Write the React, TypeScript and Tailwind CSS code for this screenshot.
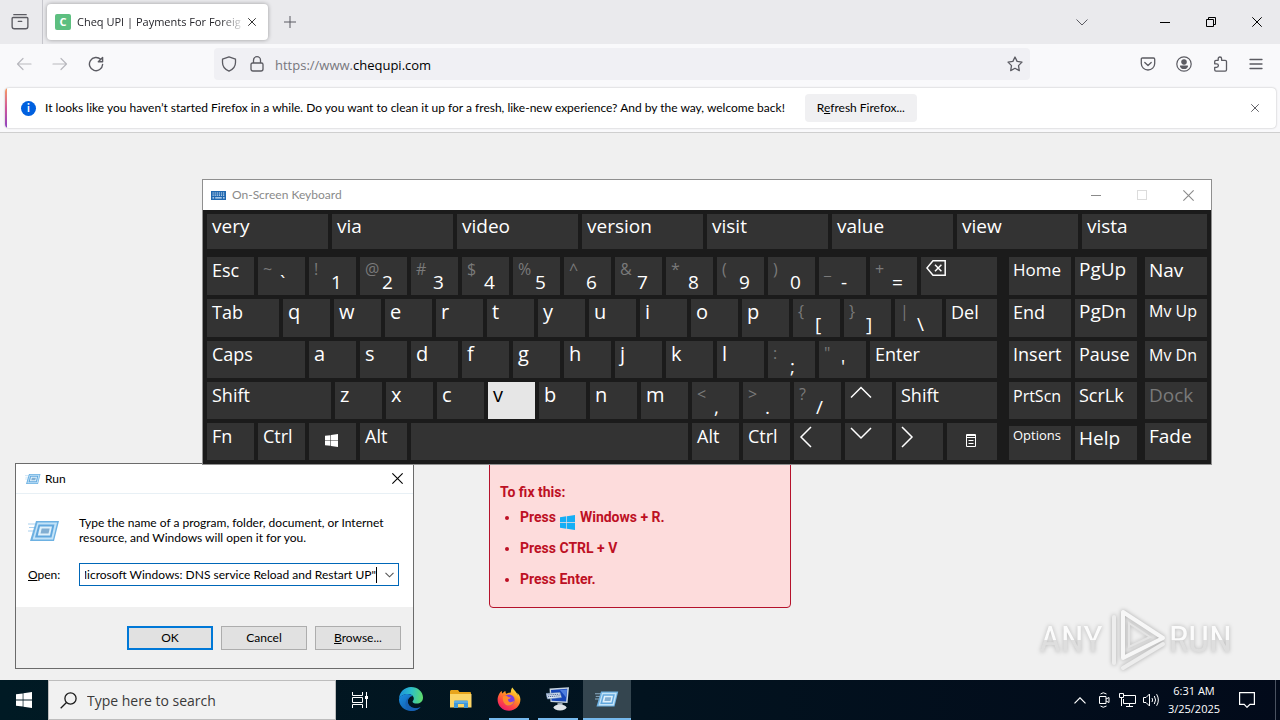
import { useEffect, useRef, type ReactNode } from "react";

/* ---------- icons ---------- */

function Stroke({ size = 16, w = 1.2, children }: { size?: number; w?: number; children: ReactNode }) {
  return (
    <svg width={size} height={size} viewBox="0 0 16 16" fill="none" stroke="currentColor" strokeWidth={w} strokeLinecap="round" strokeLinejoin="round" aria-hidden="true">
      {children}
    </svg>
  );
}

function CloseIcon({ size = 10 }: { size?: number }) {
  return (
    <svg width={size} height={size} viewBox="0 0 10 10" stroke="currentColor" strokeWidth="1" fill="none" aria-hidden="true">
      <path d="M.3.3l9.4 9.4M9.7.3L.3 9.7" />
    </svg>
  );
}

function WindowsLogo({ size, className }: { size: number; className?: string }) {
  return (
    <svg width={size} height={size} viewBox="0 0 16 16" fill="currentColor" className={className} aria-hidden="true">
      <path d="M0 2.3L6.7 1.4v6.2H0zM7.4 1.3L16 0v7.6H7.4zM0 8.4h6.7v6.2L0 13.7zM7.4 8.4H16V16l-8.6-1.3z" />
    </svg>
  );
}

function RunIcon({ className }: { className?: string }) {
  return (
    <svg viewBox="0 0 32 24" className={className} aria-hidden="true">
      <path d="M0 5h9M1 8.500h7M0 12h6" stroke="#a9d0ee" strokeWidth="1" />
      <path d="M8 2h23l-5 20H2z" fill="#6db1e2" />
      <path d="M9.500 3.500h19.600L25 20.500H4.600z" fill="#c3e3f8" />
      <path d="M10.500 5.500h16L23.500 18.500H7z" fill="#62a8de" />
      <path d="M12 7.500h12L22 16.500H9.800z" fill="#def0fb" />
      <path d="M13.700 9.500h8l-1.200 5h-8z" fill="#82aed2" />
    </svg>
  );
}

function KeyboardIcon() {
  return (
    <svg width="15" height="9" viewBox="0 0 15 9" aria-hidden="true">
      <rect width="15" height="9" fill="#2168b0" />
      <path d="M1.500 2h12M1.500 4.200h12" stroke="#cfe3f6" strokeWidth="1.200" strokeDasharray="1.200 .9" />
      <path d="M1.500 6.800h1.600M4.200 6.800h6.600M12 6.800h1.600" stroke="#cfe3f6" strokeWidth="1.200" />
    </svg>
  );
}

function EdgeIcon() {
  return (
    <svg width="24" height="24" viewBox="0 0 24 24" aria-hidden="true">
      <defs>
        <linearGradient id="edgeTop" x1="0" y1="0.300" x2="1" y2="0.400">
          <stop offset="0" stopColor="#1b8fdc" />
          <stop offset=".5" stopColor="#2cbfc9" />
          <stop offset="1" stopColor="#5edb6c" />
        </linearGradient>
        <linearGradient id="edgeLow" x1="0" y1="0" x2="1" y2="1">
          <stop offset="0" stopColor="#1a8ee0" />
          <stop offset="1" stopColor="#0f4f9e" />
        </linearGradient>
      </defs>
      <path d="M0 11.500C.5 5 5.600 0 12 0c7 0 12 5 12 10.500 0 4-3 6-6.200 6-2.800 0-4.300-1-4.300-1.800 0-.7 1.300-1.200 1.300-3.200C14.800 9 12.300 7 8.800 7 5 7 1.500 9 0 11.500z" fill="url(#edgeTop)" />
      <path d="M0 12C1 9 4.500 7 8.800 7c2.200 0 4 .8 5 2-3 .3-5 2.700-5 5.500 0 4 3.700 6.700 8 6.700 2 0 3.600-.5 4.900-1.200C19.500 22.600 16 24 12 24 5 24-.3 18.500 0 12z" fill="url(#edgeLow)" />
      <path d="M8.800 14.500c0-2 1-4 3-5-2.800 1-5.300 3.500-5.300 7.200 0 3.500 2.500 6.300 5.500 7.200 4 0 7.500-1.500 9.700-4-1.300.8-2.900 1.300-4.900 1.300-4.300 0-8-2.700-8-6.700z" fill="#1762b4" />
    </svg>
  );
}

function FolderIcon() {
  return (
    <svg width="22" height="20" viewBox="0 0 22 20" aria-hidden="true">
      <path d="M0 2.500Q0 1 1.200 1H8l1.500 2H20q1 0 1 1v14H0z" fill="#e8a51c" />
      <path d="M0 5h21.500v13.500H0z" fill="#fcd566" />
      <path d="M4 19v-6.500q0-1 1-1h12q1 0 1 1V19h-4v-4H8v4z" fill="#3f97d8" />
      <path d="M4 13h14" stroke="#7cc0ee" strokeWidth="1" />
    </svg>
  );
}

function FirefoxIcon() {
  return (
    <svg width="24" height="24" viewBox="0 0 24 24" aria-hidden="true">
      <defs>
        <linearGradient id="ffBody" x1=".8" y1="0" x2=".2" y2="1">
          <stop offset="0" stopColor="#fff04a" />
          <stop offset=".35" stopColor="#ff9a1f" />
          <stop offset=".7" stopColor="#ff4346" />
          <stop offset="1" stopColor="#e6186f" />
        </linearGradient>
      </defs>
      <path d="M22.600 9c-.5-1.300-1.600-2.700-2.500-3.100.5 1 .8 1.900.9 2.600C19.600 5 17.200 3.700 15.300.6c-.2.200-1.600 2.600-1.500 4.800-1.900 0-3.300.6-4.400 1.400-.8-.6-.9-1.500-1-2.700C7 4.600 5.900 5.900 5.200 6.600c-.3-.8-.4-2-.3-2.700C2.700 5 .6 9 .6 12.700.6 18.900 5.700 23.700 12 23.700S23.400 18.800 23.400 12.500c0-1.200-.3-2.500-.8-3.500z" fill="url(#ffBody)" />
      <circle cx="12" cy="13" r="5.600" fill="#7a3fe0" />
      <path d="M6 9.500c2-1.300 4.200-.6 5.500.7h2.200c0 1-1.400 1.600-2.600 2-.3 1.500.6 3 2.500 3 1.500 0 2.500-.8 3.400-1.200-.5 3-3 4.800-5.500 4.600C7.500 18.300 5 14 6 9.500z" fill="#ff8a2b" />
    </svg>
  );
}

function OskTaskIcon() {
  return (
    <svg width="24" height="24" viewBox="0 0 24 24" aria-hidden="true">
      <path d="M3.500 1.500L23 .3 21.500 16 4.500 15z" fill="#c9d6e2" />
      <path d="M5 3l16.300-1.200-1.200 12.800-14.500-.8z" fill="#1746b8" />
      <path d="M14 3l7-.6-.8 8z" fill="#4f7fe0" />
      <path d="M0 6.500l14-1 1.500 5L1.500 12z" fill="#dfe9f5" stroke="#6e8fb5" strokeWidth=".6" />
      <path d="M1.500 8l12-.8M2 9.700l12-.9" stroke="#33508a" strokeWidth=".9" strokeDasharray="1.200 .7" />
      <path d="M11.500 16h5v3h-5z" fill="#9aa7b3" />
      <ellipse cx="14" cy="20.500" rx="6.500" ry="2.900" fill="#dfe4e8" />
    </svg>
  );
}

function TaskViewIcon() {
  return (
    <svg width="17" height="16" viewBox="0 0 17 16" fill="none" stroke="#fff" strokeWidth="1" aria-hidden="true">
      <path d="M.5 0v3.500h10V0M.5 5.500h10v5H.5zM.5 16v-3.500h10V16M14.500 0v16" />
      <path d="M13 4h3v3h-3z" fill="#fff" stroke="none" />
    </svg>
  );
}

/* ---------- on-screen keyboard ---------- */

type KeyDef = { id: string; label?: ReactNode; upper?: string; width?: string; style?: string; pressed?: boolean };

const letters = (s: string): KeyDef[] => s.split("").map((c) => ({ id: c, label: c, style: "text-[20px]" }));
const dual = (pairs: string[]): KeyDef[] => pairs.map((p) => ({ id: p, upper: p[0], label: p[1] }));

function Chevron({ d }: { d: string }) {
  return (
    <svg width="24" height="24" viewBox="0 0 24 24" fill="none" stroke="#fff" strokeWidth="1.500" className="mt-0.5" aria-hidden="true">
      <path d={d} />
    </svg>
  );
}

const rows: { height: string; keys: KeyDef[] }[] = [
  {
    height: "h-[38px]",
    keys: [
      { id: "Esc", label: "Esc" },
      ...dual(["~`", "!1", "@2", "#3", "$4", "%5", "^6", "&7", "*8", "(9", ")0", "_-", "+="]),
      {
        id: "Backspace",
        width: "w-[76px]",
        label: (
          <svg width="20" height="16" viewBox="0 0 20 16" fill="none" stroke="#fff" strokeWidth="1.500" className="mt-[3px]" aria-hidden="true">
            <path d="M7 .8h12.200v14.400H7L.9 8zM9 4.800l6.400 6.400M15.400 4.800L9 11.200" />
          </svg>
        ),
      },
    ],
  },
  {
    height: "h-[38px]",
    keys: [{ id: "Tab", label: "Tab", width: "w-[72px]" }, ...letters("qwertyuiop"), ...dual(["{[", "}]", "|\\"]), { id: "Del", label: "Del", width: "w-[51px]" }],
  },
  {
    height: "h-[37px]",
    keys: [{ id: "Caps", label: "Caps", width: "w-[98px]" }, ...letters("asdfghjkl"), ...dual([":;", "\"'"]), { id: "Enter", label: "Enter", width: "w-[127px]" }],
  },
  {
    height: "h-[37px]",
    keys: [
      { id: "ShiftL", label: "Shift", width: "w-[124px]" },
      ...letters("zxcvbnm").map((k) => ({ ...k, pressed: k.id === "v" })),
      ...dual(["<,", ">.", "?/"]),
      { id: "Up", label: <Chevron d="M1 13.500L11 3.500l10 10" /> },
      { id: "ShiftR", label: "Shift", width: "w-[101px]" },
    ],
  },
  {
    height: "h-[37px]",
    keys: [
      { id: "Fn", label: "Fn" },
      { id: "CtrlL", label: "Ctrl" },
      { id: "Win", label: <WindowsLogo size={13} className="mt-[11px] ml-[11px]" /> },
      { id: "AltL", label: "Alt" },
      { id: "Space", label: "", width: "w-[277px]" },
      { id: "AltR", label: "Alt" },
      { id: "CtrlR", label: "Ctrl" },
      { id: "Left", label: <Chevron d="M12 2L2 12l10 10" /> },
      { id: "Down", label: <Chevron d="M1 3l10 10L21 3" /> },
      { id: "Right", label: <Chevron d="M1 2l10 10L1 22" /> },
      {
        id: "Menu",
        width: "w-[50px]",
        label: (
          <svg width="10" height="13" viewBox="0 0 10 13" fill="none" stroke="#fff" className="mt-[11px] ml-3.5" aria-hidden="true">
            <path d="M.5.500h9v12h-9zM0 1.500h10M0 3.500h10M2.500 6.500h5M2.500 9.500h5" />
          </svg>
        ),
      },
    ],
  },
];

type SideKey = { id: string; style: string; dim?: boolean };

const navCols: SideKey[][] = [
  [
    { id: "Home", style: "h-[38px] text-[17px] leading-[26px]" },
    { id: "End", style: "h-[38px] text-[18px] leading-[26px]" },
    { id: "Insert", style: "h-[37px] text-[18px] leading-[26px]" },
    { id: "PrtScn", style: "h-[37px] text-[16px] leading-7" },
    { id: "Options", style: "mt-[3px] h-[34px] text-[13px] leading-[18px]" },
  ],
  [
    { id: "PgUp", style: "h-[38px] text-[19px] leading-6" },
    { id: "PgDn", style: "h-[38px] text-[19px] leading-6" },
    { id: "Pause", style: "h-[37px] text-[18px] leading-[26px]" },
    { id: "ScrLk", style: "h-[37px] text-[18px] leading-[26px]" },
    { id: "Help", style: "mt-[3px] h-[34px] text-[19px] leading-6" },
  ],
];
const sideCol: SideKey[] = [
  { id: "Nav", style: "h-[38px] text-[19px] leading-[26px]" },
  { id: "Mv Up", style: "h-[38px] text-[16px] leading-6" },
  { id: "Mv Dn", style: "h-[37px] text-[16px] leading-7" },
  { id: "Dock", style: "h-[37px] text-[19px] leading-[26px]", dim: true },
  { id: "Fade", style: "h-[37px] text-[19px] leading-[26px]" },
];

function Key({ k, height }: { k: KeyDef; height: string }) {
  const tone = k.pressed ? "bg-[#e6e6e6] text-black" : "bg-[#333] text-white";
  return (
    <button aria-label={k.id} className={`flex shrink-0 items-start overflow-hidden pl-[5px] text-left leading-[26px] ${height} ${k.width ?? "w-[47px]"} ${k.style ?? "text-[18px]"} ${tone}`}>
      {k.upper ? (
        <>
          <span className="w-[17px] text-[16px] leading-6 text-[#7a7a7a]">{k.upper}</span>
          <span className="mt-3 text-[19px]">{k.label}</span>
        </>
      ) : (
        k.label
      )}
    </button>
  );
}

function KeyColumn({ items }: { items: SideKey[] }) {
  return (
    <div className="flex w-[62px] flex-col gap-1">
      {items.map((k) => (
        <button key={k.id} className={`flex items-start overflow-hidden bg-[#333] pl-1 text-left whitespace-nowrap ${k.style} ${k.dim ? "text-[#7a7a7a]" : "text-white"}`}>
          {k.id}
        </button>
      ))}
    </div>
  );
}

function OnScreenKeyboard() {
  return (
    <section className="absolute top-[179px] left-[202px] z-20 w-[1010px] border border-[#8f8f8f] bg-[#1b1b1b]">
      <header className="flex h-[30px] items-center bg-white text-[#8a8a8a]">
        <span className="ml-2">
          <KeyboardIcon />
        </span>
        <h2 className="ml-1.5 font-[Lato,sans-serif] text-[12px]">On-Screen Keyboard</h2>
        <div className="ml-auto flex items-center">
          <button aria-label="Minimize" className="flex w-[46px] justify-center">
            <span className="h-px w-2.5 bg-[#8a8a8a]" />
          </button>
          <button aria-label="Maximize" className="flex w-[46px] justify-center">
            <span className="size-2.5 border border-[#dcdcdc]" />
          </button>
          <button aria-label="Close" className="flex w-[46px] justify-center">
            <CloseIcon size={11} />
          </button>
        </div>
      </header>
      <div className="p-1">
        <div className="flex gap-1">
          {["very", "via", "video", "version", "visit", "value", "view", "vista"].map((w) => (
            <button key={w} className="flex h-[35px] w-[121px] items-start bg-[#333] pl-[5px] text-[19px] leading-6 text-white last:w-auto last:flex-1">
              {w}
            </button>
          ))}
        </div>
        <div className="mt-2 flex">
          <div className="flex flex-col gap-1">
            {rows.map((r, i) => (
              <div key={i} className="flex gap-1">
                {r.keys.map((k) => (
                  <Key key={k.id} k={k} height={r.height} />
                ))}
              </div>
            ))}
          </div>
          <div className="ml-3 flex gap-1">
            {navCols.map((c, i) => (
              <KeyColumn key={i} items={c} />
            ))}
          </div>
          <div className="ml-2">
            <KeyColumn items={sideCol} />
          </div>
        </div>
      </div>
    </section>
  );
}

/* ---------- run dialog ---------- */

function RunDialog() {
  const field = useRef<HTMLInputElement>(null);
  useEffect(() => {
    if (field.current) field.current.scrollLeft = field.current.scrollWidth;
  }, []);
  const button = "h-6 w-[86px] bg-[#e1e1e1] text-[12px]";
  return (
    <section className="absolute top-[463px] left-[15px] z-10 w-[399px] border border-[#6b6b6b] bg-white font-[Lato,sans-serif] text-[12px] text-black">
      <header className="flex h-[30px] items-center border-b border-[#e8f0f5] pr-2.5 pl-[9px]">
        <RunIcon className="h-3 w-4" />
        <h2 className="ml-1">Run</h2>
        <button aria-label="Close" className="ml-auto">
          <CloseIcon size={11} />
        </button>
      </header>
      <div className="h-[113px] pr-3.5 pl-3">
        <div className="flex pt-[21px]">
          <RunIcon className="mt-1 h-6 w-8 shrink-0" />
          <p className="ml-[19px] leading-[15px] whitespace-nowrap">
            Type the name of a program, folder, document, or Internet
            <br />
            resource, and Windows will open it for you.
          </p>
        </div>
        <div className="mt-[18px] flex items-center">
          <label htmlFor="open" className="w-[51px]">
            <u>O</u>pen:
          </label>
          <div className="flex h-[23px] flex-1 items-center border border-[#0067b8] pl-[5px]">
            <input id="open" ref={field} defaultValue={'Microsoft Windows: DNS service Reload and Restart UP"'} className="h-4 w-[292px] border-r border-black outline-none" />
            <svg width="9" height="6" viewBox="0 0 9 6" fill="none" stroke="#555" strokeWidth="1.100" className="ml-2" aria-hidden="true">
              <path d="M.5.800l4 4 4-4" />
            </svg>
          </div>
        </div>
      </div>
      <footer className="flex h-[61px] items-center justify-end gap-2 bg-[#f0f0f0] pr-3">
        <button className={`${button} border-2 border-[#0078d7]`}>OK</button>
        <button className={`${button} border border-[#adadad]`}>Cancel</button>
        <button className={`${button} border border-[#adadad]`}>
          <u>B</u>rowse...
        </button>
      </footer>
    </section>
  );
}

/* ---------- browser ---------- */

function Browser() {
  return (
    <>
      <div className="flex h-11 items-center bg-[#eaeaed] text-[#5b5b62]">
        <button aria-label="Recent browsing" className="flex h-full w-[43px] items-center justify-center border-r border-[#c6c6cc] pr-0.5">
          <Stroke size={18}>
            <path d="M2.500 1.500h11M1.800 4h12.400q.8 0 .8.800V12q0 2-2 2H3q-2 0-2-2V4.800q0-.8.800-.8zM6.500 7.500h3" />
          </Stroke>
        </button>
        <div className="ml-1 flex h-9 w-[221px] items-center rounded bg-white pr-3 pl-2 shadow-[0_0_4px_rgba(0,0,0,0.35)]">
          <span className="flex size-4 items-center justify-center rounded-xs bg-[#5dbf80] text-[11px] font-bold text-white">C</span>
          <span className="ml-1.5 w-[168px] mask-r-from-85% text-[11px] whitespace-nowrap text-[#26262c]">Cheq UPI | Payments For Foreig</span>
          <button aria-label="Close tab" className="ml-auto text-black">
            <CloseIcon size={8} />
          </button>
        </div>
        <button aria-label="New tab" className="ml-4">
          <svg width="12" height="12" viewBox="0 0 12 12" stroke="currentColor" aria-hidden="true">
            <path d="M6 0v12M0 6h12" />
          </svg>
        </button>
        <button aria-label="List all tabs" className="mr-[54px] ml-auto">
          <svg width="12" height="7" viewBox="0 0 12 7" fill="none" stroke="currentColor" aria-hidden="true">
            <path d="M.5.500L6 6 11.500.5" />
          </svg>
        </button>
        <div className="flex text-black">
          <button aria-label="Minimize" className="flex w-[46px] items-center justify-center">
            <span className="h-px w-2.5 bg-black" />
          </button>
          <button aria-label="Restore" className="flex w-[46px] items-center justify-center">
            <svg width="10" height="10" viewBox="0 0 10 10" fill="none" stroke="currentColor" aria-hidden="true">
              <path d="M.5 2.500h7v7h-7zM2.500 2.500v-2h7v7h-2" />
            </svg>
          </button>
          <button aria-label="Close" className="flex w-[46px] items-center justify-center">
            <CloseIcon />
          </button>
        </div>
      </div>

      <div className="flex h-11 items-center bg-[#f9f9fb] px-4 pb-1 text-[#5b5b62]">
        <div className="flex w-[198px] gap-5">
          <button aria-label="Back" className="text-[#b9b9be]">
            <Stroke>
              <path d="M15 8H1.500M7 2.500L1.500 8 7 13.500" />
            </Stroke>
          </button>
          <button aria-label="Forward" className="text-[#b9b9be]">
            <Stroke>
              <path d="M1 8h13.500M9 2.500L14.500 8 9 13.500" />
            </Stroke>
          </button>
          <button aria-label="Reload">
            <Stroke w={1.4}>
              <path d="M14.600 8.500A6.600 6.600 0 1 1 12.800 3.500M14.600 1.500v4.300h-4.300z" />
            </Stroke>
          </button>
        </div>
        <div className="flex h-8 w-[816px] items-center rounded bg-[#f0f0f4] px-[7px]">
          <Stroke w={1.3}>
            <path d="M8 .8l6.500 2.400v3.300c0 4-2.500 7-6.500 8.700-4-1.700-6.500-4.700-6.500-8.700V3.200z" />
          </Stroke>
          <span className="ml-3">
            <Stroke w={1.3}>
              <path d="M3.500 7h9q1.500 0 1.500 1.500V13q0 2-2 2H4q-2 0-2-2V8.500Q2 7 3.500 7zM4.500 7V4.200a3.500 3.500 0 0 1 7 0V7" />
            </Stroke>
          </span>
          <a href="https://www.chequpi.com" className="mt-1 ml-2.5 text-[13px] text-[#77777d]">
            https://www.<span className="text-black">chequpi.com</span>
          </a>
          <button aria-label="Bookmark" className="ml-auto">
            <Stroke w={1.3}>
              <path d="M8 1l2.100 4.400 4.900.7-3.500 3.500.8 5L8 12.300l-4.300 2.300.8-5L1 6.100l4.900-.7z" />
            </Stroke>
          </button>
        </div>
        <div className="ml-auto flex gap-5 pb-px">
          <button aria-label="Pocket">
            <Stroke w={1.3}>
              <path d="M2.500 2h11q1.200 0 1.200 1.200V7.500a6.700 6.500 0 0 1-13.400 0V3.200Q1.300 2 2.500 2zM4.800 6.500L8 9.500l3.200-3" />
            </Stroke>
          </button>
          <button aria-label="Account">
            <Stroke>
              <circle cx="8" cy="8" r="7.200" />
              <circle cx="8" cy="6" r="2.200" fill="currentColor" />
              <path d="M4.500 10h7q-.8 2.500-3.500 2.500T4.500 10z" fill="currentColor" />
            </Stroke>
          </button>
          <button aria-label="Extensions">
            <Stroke w={1.3}>
              <path d="M6.200 4.300V2.700a1.700 1.700 0 0 1 3.400 0v1.600h3.600q1.300 0 1.300 1.300v8.200q0 1.300-1.300 1.300H4q-1.300 0-1.300-1.300v-2.400h1.900a1.800 1.800 0 0 0 0-3.600H2.700V5.600q0-1.300 1.300-1.300z" />
            </Stroke>
          </button>
          <button aria-label="Menu">
            <Stroke w={1.3}>
              <path d="M2 3.500h12M2 8h12M2 12.500h12" />
            </Stroke>
          </button>
        </div>
      </div>

      <div className="border-b border-[#cfcfcf] bg-[#f9f9fb] pr-1 pb-1 pl-[5px]">
        <div className="flex h-10 overflow-hidden rounded bg-white shadow-[0_0_2px_rgba(0,0,0,0.3)]">
          <span className="w-0.5 bg-linear-to-b from-[#f79a5c] via-[#d0559a] to-[#8d3fc0]" />
          <div className="flex flex-1 items-center pr-[17px] pl-3.5 font-[Lato,sans-serif] text-[12px] text-black">
            <span className="flex size-[15px] items-center justify-center rounded-full bg-[#0060df] text-[11px] font-bold text-white">i</span>
            <p className="ml-[9px] whitespace-nowrap">It looks like you haven’t started Firefox in a while. Do you want to clean it up for a fresh, like-new experience? And by the way, welcome back!</p>
            <button className="ml-5 h-7 w-28 rounded bg-[#f0f0f2]">
              R<u>e</u>fresh Firefox...
            </button>
            <button aria-label="Dismiss" className="ml-auto text-[#3a3a40]">
              <CloseIcon size={8} />
            </button>
          </div>
        </div>
      </div>
    </>
  );
}

function Watermark() {
  const word =
    "bg-linear-to-b from-[#fbfbfb] from-50% to-[#dedede] to-50% bg-clip-text font-['Roboto_Condensed','Open_Sans_Condensed','Noto_Sans_Condensed',Roboto,sans-serif] text-[37px] leading-[48px] text-transparent drop-shadow-[0_0_2px_rgba(0,0,0,0.25)]";
  return (
    <div className="absolute right-12 bottom-[7px] flex items-center">
      <span className={word}>ANY</span>
      <svg width="66" height="66" viewBox="0 0 66 66" fill="none" className="drop-shadow-[0_0_2px_rgba(0,0,0,0.3)]" aria-hidden="true">
        <path d="M20 5v46L60 31z" stroke="#f7f7f7" strokeWidth="4" strokeLinejoin="round" />
        <path d="M11 10v46M20 61l40-24" stroke="#ededed" strokeWidth="4" strokeLinecap="round" />
        <path d="M26 16v24l21-10z" stroke="#e4e4e4" strokeWidth="2" />
      </svg>
      <span className={word}>RUN</span>
    </div>
  );
}

function Instructions() {
  return (
    <section className="flex h-[180px] w-[302px] flex-col justify-end rounded border border-[#b5122b] bg-[#fddcdc] px-2.5 pb-[18px] font-[Roboto,sans-serif] text-[14px] font-bold text-[#bd1024]">
      <h1 className="leading-5">To fix this:</h1>
      <ul className="mt-[5px] list-disc space-y-[11px] pl-5 leading-5">
        <li>
          Press <WindowsLogo size={15} className="mx-px inline translate-y-1 text-[#15aef5]" /> Windows + R.
        </li>
        <li>Press CTRL + V</li>
        <li>Press Enter.</li>
      </ul>
    </section>
  );
}

/* ---------- taskbar ---------- */

function Taskbar() {
  return (
    <footer className="flex h-10 bg-linear-to-r from-[#001a24] via-[#02131f] to-[#020a1a] text-white">
      <button aria-label="Start" className="flex w-12 items-center justify-center">
        <WindowsLogo size={16} />
      </button>
      <label className="flex w-72 items-center border border-[#bdbdbd] bg-[#f1f1f1] pl-[11px] text-[#1a1a1a]">
        <svg width="17" height="17" viewBox="0 0 17 17" fill="none" stroke="currentColor" strokeWidth="1.300" aria-hidden="true">
          <circle cx="10.500" cy="6.500" r="5.600" />
          <path d="M6.500 10.500L.7 16.300" />
        </svg>
        <input aria-label="Search" placeholder="Type here to search" className="ml-2.5 w-56 bg-transparent text-[14px] outline-none placeholder:text-[#3a3a3a]" />
      </label>
      <button aria-label="Task view" className="flex w-12 items-center justify-center">
        <TaskViewIcon />
      </button>
      {[
        { id: "Microsoft Edge", icon: <EdgeIcon />, bar: "", cell: "w-[54px]" },
        { id: "File Explorer", icon: <FolderIcon />, bar: "", cell: "w-[46px]" },
        { id: "Firefox", icon: <FirefoxIcon />, bar: "w-10 bg-[#76b9ed]", cell: "w-[49px]" },
        { id: "On-Screen Keyboard", icon: <OskTaskIcon />, bar: "w-10 bg-[#76b9ed]", cell: "w-[50px]" },
        { id: "Run", icon: <RunIcon className="h-[18px] w-6" />, bar: "w-12 bg-[#76b9ed]", cell: "w-12 bg-[#34454f]" },
      ].map((t) => (
        <button key={t.id} aria-label={t.id} className={`flex flex-col items-center ${t.cell}`}>
          <span className="flex flex-1 items-center">{t.icon}</span>
          <span className={`h-0.5 ${t.bar}`} />
        </button>
      ))}
      <div className="ml-auto flex items-center">
        <button aria-label="Show hidden icons">
          <svg width="12" height="7" viewBox="0 0 12 7" fill="none" stroke="#fff" strokeWidth="1.200" aria-hidden="true">
            <path d="M.5 6.300L6 .8l5.500 5.500" />
          </svg>
        </button>
        <svg width="12" height="16" viewBox="0 0 12 16" fill="none" stroke="#fff" className="ml-3" aria-hidden="true">
          <path d="M1.500 4.500h6.500v7H1.500zM8 7l3-1.500v5L8 9M2.500 2q2.500-2.500 6 0M2.500 14q2.500 2.500 6 0" />
        </svg>
        <svg width="17" height="14" viewBox="0 0 17 14" fill="none" stroke="#fff" className="ml-[9px]" aria-hidden="true">
          <path d="M5 2.500h11.500v8H4.500V6M10.500 10.500v3M7 13.500h7M.5.500h4v4h-4zM2.500 4.500v8.500" />
        </svg>
        <svg width="17" height="14" viewBox="0 0 17 14" fill="none" stroke="#fff" className="ml-[7px]" aria-hidden="true">
          <path d="M.5 4.500h2.500L6.500 1v12L3 9.500H.5zM9 5q1.200 2 0 4M11.300 3q2.500 4 0 8M13.600 1.200q3.500 5.800 0 11.600" />
        </svg>
        <time className="ml-1.5 w-14 text-center text-[11px] leading-[18px] whitespace-nowrap">
          6:31 AM
          <br />
          3/25/2025
        </time>
        <button aria-label="Notifications" className="mr-5 ml-[17px]">
          <svg width="16" height="16" viewBox="0 0 16 16" fill="none" stroke="#fff" strokeWidth="1.200" aria-hidden="true">
            <path d="M.6.600h14.800v11.800H11L8 15.300 5.200 12.400H.6z" />
          </svg>
        </button>
        <span className="mr-1 h-10 w-px bg-[#4a5260]" />
      </div>
    </footer>
  );
}

export default function App() {
  return (
    <div className="relative flex min-h-screen flex-col bg-[#f0f0f0] font-['Open_Sans','Noto_Sans',sans-serif]">
      <Browser />
      <main className="relative flex flex-1 flex-col items-center justify-end pb-[72px]">
        <Instructions />
        <Watermark />
      </main>
      <OnScreenKeyboard />
      <RunDialog />
      <Taskbar />
    </div>
  );
}
